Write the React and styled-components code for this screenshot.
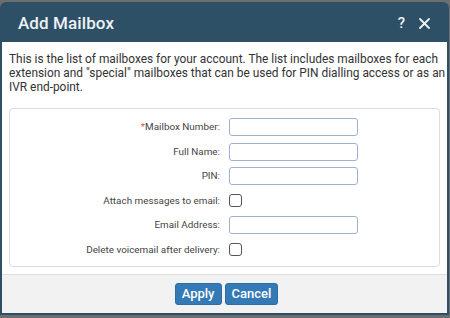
import React from "react";
import styled, { createGlobalStyle } from "styled-components";

const Global = createGlobalStyle`
  html, body { margin: 0; padding: 0; }
  body {
    background: #6e6e6e;
    font-family: Roboto, "Liberation Sans", Arial, sans-serif;
    width: 450px;
    height: 318px;
    overflow: hidden;
  }
`;

const Dialog = styled.div`
  margin-top: 2px;
  width: 449px;
  height: 313px;
  box-sizing: border-box;
  background: #2e5067;
  border-radius: 6px 6px 0 0;
  padding: 0 2px 2px 2px;
  display: flex;
  flex-direction: column;
`;

const Header = styled.div`
  height: 42px;
  display: flex;
  align-items: center;
  padding: 0 0 0 16px;
  color: #eef2f5;
`;

const Title = styled.div`
  flex: 1;
  font-size: 17px;
  font-weight: 500;
  letter-spacing: 0.1px;
  padding-top: 1px;
`;

const HeaderIcons = styled.div`
  display: flex;
  align-items: center;
  gap: 14px;
  padding-right: 17px;
  padding-top: 2px;
`;

const HelpIcon = styled.span`
  font-size: 15px;
  font-weight: 500;
  color: #eef2f5;
`;

const Body = styled.div`
  background: #ffffff;
  flex: 1;
  padding: 10px 7px 7px 7px;
  display: flex;
  flex-direction: column;
`;

const Intro = styled.p`
  margin: 0 -8px 14px 0;
  font-size: 11.9px;
  line-height: 14px;
  color: #333;
`;

const Fieldset = styled.div`
  border: 1px solid #dcdcdc;
  border-radius: 4px;
  padding: 9px 0 7px 0;
  display: grid;
  grid-template-columns: 210px 1fr;
  column-gap: 9px;
  row-gap: 6.5px;
  align-items: center;
`;

const Label = styled.label`
  text-align: right;
  font-size: 9.9px;
  color: #444;
  line-height: 18px;
`;

const Req = styled.span`
  color: #d9534f;
`;

const TextInput = styled.input`
  width: 129px;
  height: 18px;
  box-sizing: border-box;
  border: 1px solid #9db2cf;
  border-radius: 3px;
  padding: 0 4px;
  margin: 0;
  font-size: 11px;
  outline: none;
`;

const Check = styled.span`
  display: block;
  width: 13px;
  height: 13px;
  box-sizing: border-box;
  border: 1px solid #555;
  border-radius: 3px;
  background: #fff;
`;

const Footer = styled.div`
  background: #f2f2f2;
  border-top: 1px solid #dedede;
  height: 40px;
  display: flex;
  justify-content: center;
  align-items: center;
  gap: 3px;
  padding-left: 4px;
`;

const Button = styled.button`
  height: 22px;
  padding: 0 6px;
  background: #337ab7;
  border: 1px solid #2e6da4;
  border-radius: 3px;
  color: #fff;
  font-family: Roboto, "Liberation Sans", Arial, sans-serif;
  font-size: 13px;
  font-weight: 500;
  cursor: pointer;
`;

const fields = [
  { label: "Mailbox Number:", type: "text", required: true },
  { label: "Full Name:", type: "text" },
  { label: "PIN:", type: "text" },
  { label: "Attach messages to email:", type: "check" },
  { label: "Email Address:", type: "text" },
  { label: "Delete voicemail after delivery:", type: "check" },
];

export default function App() {
  return (
    <>
      <Global />
      <Dialog>
        <Header>
          <Title>Add Mailbox</Title>
          <HeaderIcons>
            <HelpIcon>?</HelpIcon>
            <svg width="11" height="11" viewBox="0 0 11 11">
              <path d="M1 1 L10 10 M10 1 L1 10" stroke="#eef2f5" strokeWidth="1.8" strokeLinecap="round" />
            </svg>
          </HeaderIcons>
        </Header>
        <Body>
          <Intro>
            This is the list of mailboxes for your account. The list includes mailboxes for each
            extension and "special" mailboxes that can be used for PIN dialling access or as an
            IVR end-point.
          </Intro>
          <Fieldset>
            {fields.map((f) => (
              <React.Fragment key={f.label}>
                <Label>
                  {f.required && <Req>*</Req>}
                  {f.label}
                </Label>
                {f.type === "text" ? <TextInput type="text" /> : <Check />}
              </React.Fragment>
            ))}
          </Fieldset>
        </Body>
        <Footer>
          <Button>Apply</Button>
          <Button>Cancel</Button>
        </Footer>
      </Dialog>
    </>
  );
}
